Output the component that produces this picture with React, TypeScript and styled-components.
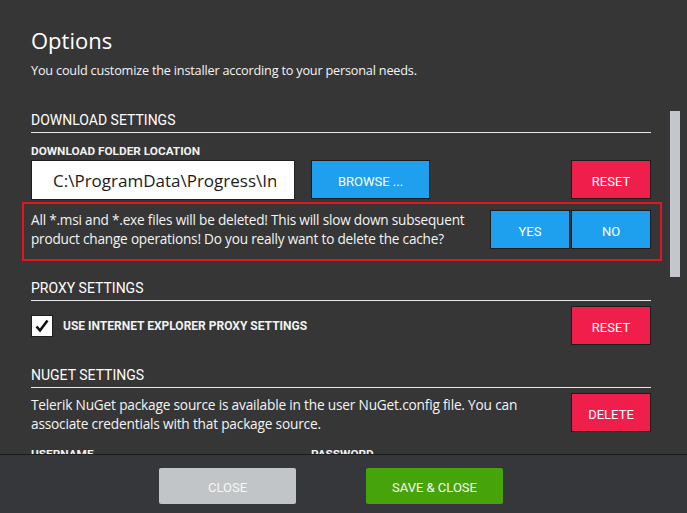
import React from "react";
import styled, { createGlobalStyle } from "styled-components";

const Global = createGlobalStyle`
  html, body { margin: 0; padding: 0; background: #363636; }
  body { width: 687px; height: 513px; overflow: hidden; font-family: "Open Sans", "Noto Sans", sans-serif; }
  * { box-sizing: border-box; }
`;

const Window = styled.div`
  width: 687px;
  height: 513px;
  display: flex;
  flex-direction: column;
  background: #363636;
  color: #f4f4f4;
`;

const Body = styled.div`
  flex: 1;
  display: flex;
  min-height: 0;
  overflow: hidden;
`;

const Scroll = styled.div`
  flex: 1;
  padding: 25px 19px 0 31px;
  display: flex;
  flex-direction: column;
  overflow: hidden;
`;

const Track = styled.div`
  width: 10px;
  margin-right: 7px;
  padding-top: 111px;
`;

const Thumb = styled.div`
  height: 166px;
  background: #c3c6ca;
`;

const Title = styled.h1`
  margin: 0;
  font-family: "Open Sans", sans-serif;
  font-weight: 400;
  font-size: 22px;
  line-height: 30px;
  color: #ffffff;
`;

const Subtitle = styled.p`
  margin: 6px 0 0;
  font-size: 12.7px;
  line-height: 18px;
  letter-spacing: -0.2px;
`;

const Heading = styled.h2<{ $top: number }>`
  margin: ${(p) => p.$top}px 0 0;
  padding-bottom: 3px;
  border-bottom: 1px solid #e8e8e8;
  font-family: Roboto, sans-serif;
  font-weight: 400;
  font-size: 14px;
  line-height: 17px;
  color: #ffffff;
`;

const FieldLabel = styled.div`
  margin-top: 11px;
  font-family: Roboto, sans-serif;
  font-weight: 700;
  font-size: 11.8px;
  line-height: 14px;
  color: #f2f2f2;
`;

const Row = styled.div<{ $top: number; $align?: string }>`
  margin-top: ${(p) => p.$top}px;
  display: flex;
  align-items: ${(p) => p.$align || "flex-start"};
  gap: 16px;
`;

const PathInput = styled.input`
  width: 264px;
  height: 40px;
  border: 1px solid #202020;
  background: #ffffff;
  padding: 0 18px 0 21px;
  font-family: "Open Sans", sans-serif;
  font-size: 17px;
  color: #1c1c1c;
  outline: none;
`;

const Button = styled.button<{ $variant: "blue" | "red"; $w: number }>`
  width: ${(p) => p.$w}px;
  height: 39px;
  flex: none;
  border: 1px solid #1c1c1c;
  background: ${(p) => (p.$variant === "blue" ? "#1fa0ee" : "#f01e4b")};
  color: #ffffff;
  font-family: Roboto, sans-serif;
  font-size: 13px;
  padding: 3px 0 0;
  cursor: pointer;
`;

const Push = styled.div`
  margin-left: auto;
`;

const Confirm = styled.div`
  margin: 2px -11px 0 -9px;
  border: 2px solid #e3161f;
  padding: 6px 9px 10px 7px;
  display: flex;
  align-items: flex-start;
`;

const Message = styled.p`
  margin: 0;
  flex: 1;
  font-size: 13.6px;
  line-height: 19px;
  letter-spacing: -0.2px;
`;

const Pair = styled.div`
  display: flex;
  gap: 1px;
`;

const CheckLabel = styled.label`
  display: flex;
  align-items: center;
  gap: 10px;
  font-family: Roboto, sans-serif;
  font-weight: 700;
  font-size: 12px;
  color: #f2f2f2;
`;

const Box = styled.span`
  width: 22px;
  height: 22px;
  background: #ffffff;
  border: 1px solid #1e1e1e;
  display: flex;
  align-items: center;
  justify-content: center;
`;

const Note = styled.p`
  margin: 3px 0 0;
  flex: 1;
  font-size: 13.7px;
  line-height: 18.5px;
  letter-spacing: -0.2px;
`;

const Creds = styled.div`
  margin-top: 14px;
  display: flex;
  font-family: Roboto, sans-serif;
  font-weight: 700;
  font-size: 11.8px;
  line-height: 14px;
  color: #f2f2f2;
`;

const CredLabel = styled.span`
  width: 280px;
`;

const Footer = styled.div`
  height: 59px;
  flex: none;
  border-top: 1px solid #1b1b1b;
  background: #35373a;
  display: flex;
  justify-content: center;
  gap: 70px;
  padding: 13px 25px 0 0;
`;

const FooterButton = styled.button<{ $primary?: boolean }>`
  width: 137px;
  height: 36px;
  border: none;
  border-radius: 2px;
  background: ${(p) => (p.$primary ? "#46a40a" : "#c2c5c8")};
  color: #f7f7f7;
  font-family: Roboto, sans-serif;
  font-size: 13px;
  padding: 2px 0 0;
  cursor: pointer;
`;

export default function App() {
  return (
    <Window>
      <Global />
      <Body>
        <Scroll>
          <Title>Options</Title>
          <Subtitle>You could customize the installer according to your personal needs.</Subtitle>

          <Heading $top={33}>DOWNLOAD SETTINGS</Heading>
          <FieldLabel>DOWNLOAD FOLDER LOCATION</FieldLabel>
          <Row $top={2}>
            <PathInput readOnly value={"C:\\ProgramData\\Progress\\Installer"} />
            <Button $variant="blue" $w={119}>BROWSE ...</Button>
            <Push>
              <Button $variant="red" $w={80}>RESET</Button>
            </Push>
          </Row>
          <Confirm>
            <Message>
              All *.msi and *.exe files will be deleted! This will slow down subsequent product change
              operations! Do you really want to delete the cache?
            </Message>
            <Pair>
              <Button $variant="blue" $w={80}>YES</Button>
              <Button $variant="blue" $w={80}>NO</Button>
            </Pair>
          </Confirm>

          <Heading $top={19}>PROXY SETTINGS</Heading>
          <Row $top={5} $align="center">
            <CheckLabel>
              <Box>
                <svg width="16" height="16" viewBox="0 0 16 16">
                  <polyline points="2.5,8.5 6,12.5 13.5,2.5" fill="none" stroke="#111" strokeWidth="2.6" />
                </svg>
              </Box>
              USE INTERNET EXPLORER PROXY SETTINGS
            </CheckLabel>
            <Push>
              <Button $variant="red" $w={80}>RESET</Button>
            </Push>
          </Row>

          <Heading $top={22}>NUGET SETTINGS</Heading>
          <Row $top={5}>
            <Note>
              Telerik NuGet package source is available in the user NuGet.config file. You can
              associate credentials with that package source.
            </Note>
            <Push>
              <Button $variant="red" $w={80}>DELETE</Button>
            </Push>
          </Row>
          <Creds>
            <CredLabel>USERNAME</CredLabel>
            <CredLabel>PASSWORD</CredLabel>
          </Creds>
        </Scroll>
        <Track>
          <Thumb />
        </Track>
      </Body>
      <Footer>
        <FooterButton>CLOSE</FooterButton>
        <FooterButton $primary>SAVE &amp; CLOSE</FooterButton>
      </Footer>
    </Window>
  );
}
